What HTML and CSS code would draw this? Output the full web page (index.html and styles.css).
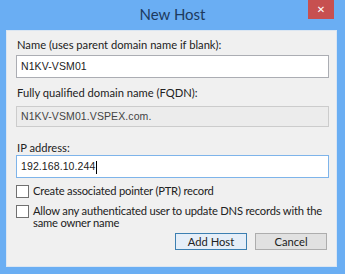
FILE: index.html
```html
<!DOCTYPE html>
<html lang="en">
<head>
    <meta charset="UTF-8">
    <title>New Host</title>
    <link rel="stylesheet" href="styles.css">
</head>
<body>
    <div class="window">
        <div class="titlebar">
            <span class="title">New Host</span>
            <span class="close">&#x2715;</span>
        </div>

        <div class="panel">
            <!-- host name -->
            <label class="label first">Name (uses parent domain name if blank):</label>
            <div class="field">N1KV-VSM01</div>

            <label class="label">Fully qualified domain name (FQDN):</label>
            <div class="field disabled">N1KV-VSM01.VSPEX.com.</div>

            <label class="label">IP address:</label>
            <div class="field focused">192.168.10.244<span class="caret"></span></div>

            <!-- options -->
            <div class="check">
                <span class="box"></span>
                <span class="check-text">Create associated pointer (PTR) record</span>
            </div>
            <div class="check">
                <span class="box"></span>
                <span class="check-text">Allow any authenticated user to update DNS records with the<br>same owner name</span>
            </div>

            <div class="buttons">
                <button class="btn default">Add Host</button>
                <button class="btn">Cancel</button>
            </div>
        </div>
    </div>
</body>
</html>
```

FILE: styles.css
```css
body {
    margin: 0;
    padding: 0;
    background-color: #6aaef3;
    font-family: Lato, "Noto Sans", sans-serif;
    font-size: 11.2px;
    color: #222;
}

.window {
    width: 345px;
    height: 274px;
}

.titlebar {
    position: relative;
    height: 30px;
    display: flex;
    justify-content: center;
    align-items: center;
}

.title {
    font-size: 15px;
    color: #1d3a5e;
    margin-top: -2px;
}

.close {
    position: absolute;
    top: 0;
    left: 308px;
    width: 26px;
    height: 19px;
    background-color: #c75050;
    color: white;
    font-family: "DejaVu Sans", sans-serif;
    font-size: 10px;
    font-weight: bold;
    display: flex;
    justify-content: center;
    align-items: center;
}

.panel {
    margin: 0 8px 0 6px;
    height: 237px;
    background-color: #f0f0f0;
    border: 1px solid #dbe6f2;
    box-sizing: border-box;
    padding: 7px 7px 0 9px;
    display: flex;
    flex-direction: column;
    overflow: hidden;
}

.label {
    display: block;
    height: 14px;
    line-height: 14px;
    padding-left: 1px;
    margin-top: 8px;
}

.label.first {
    margin-top: 0;
}

.field {
    height: 23px;
    box-sizing: border-box;
    border: 1px solid #abadb3;
    background-color: white;
    margin-top: 3px;
    padding-left: 4px;
    line-height: 21px;
    font-family: "Liberation Sans", sans-serif;
    font-size: 10.5px;
    letter-spacing: 0.1px;
    color: #222;
}

.field.disabled {
    height: 21px;
    line-height: 19px;
    background-color: #ececec;
    border-color: #cccccc;
    color: #444;
    margin-top: 6px;
    margin-bottom: 6px;
}

.field.focused {
    border-color: #7eb4ea;
    margin-top: 0;
}

.caret {
    display: inline-block;
    width: 1px;
    height: 13px;
    background-color: #000;
    vertical-align: middle;
    margin-left: 1px;
}

.check {
    display: flex;
    align-items: flex-start;
    gap: 4px;
    line-height: 12px;
    margin-top: 7px;
}

.check:first-of-type {
    margin-top: 9px;
}

.check-text {
    white-space: nowrap;
    letter-spacing: -0.2px;
}

.box {
    flex-shrink: 0;
    width: 13px;
    height: 13px;
    box-sizing: border-box;
    border: 1px solid #707070;
    background-color: white;
}

.buttons {
    display: flex;
    justify-content: flex-end;
    gap: 8px;
    margin-top: 4px;
    padding-right: 2px;
}

.btn {
    width: 72px;
    height: 17px;
    font-family: Lato, "Noto Sans", sans-serif;
    font-size: 11.2px;
    line-height: 15px;
    color: #222;
    background-color: #e1e1e1;
    border: 1px solid #adadad;
    padding: 0;
}

.btn.default {
    border-color: #3c7fb1;
    background-color: #e5eef8;
}
```
